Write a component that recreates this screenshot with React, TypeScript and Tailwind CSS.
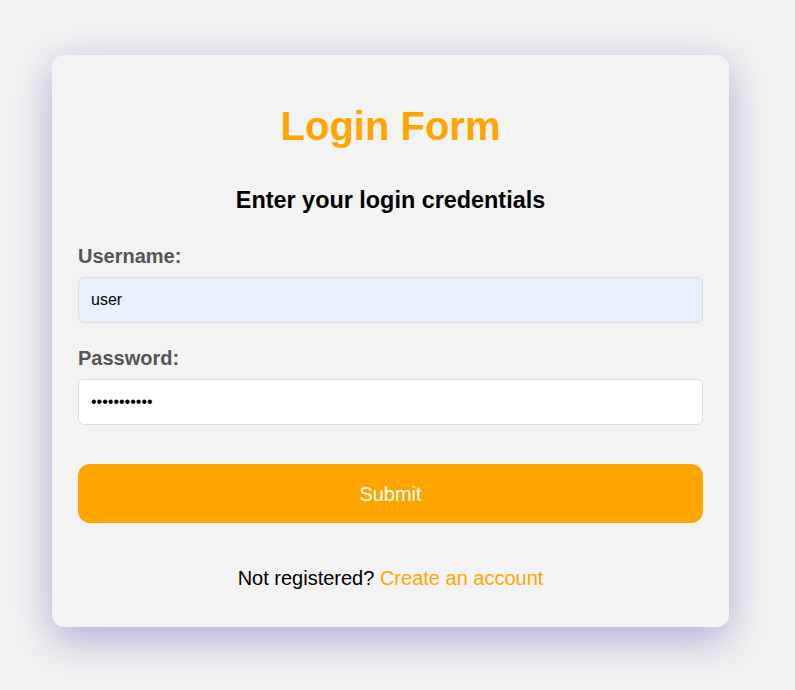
import React from "react";

const App = () => {
  return (
    <div className="w-full min-h-screen bg-[#f2f2f2] pt-[55px] pl-[52px] font-['Liberation_Sans',Arial,sans-serif]">
      <div className="w-[677px] h-[572px] bg-[#f3f3f3] rounded-[12px] shadow-[0_12px_40px_rgba(70,70,170,0.4)] px-[26px] pt-[48px]">
        <h1 className="text-center text-[40px] leading-[46px] font-bold text-[#ffa500]">Login Form</h1>
        <h2 className="mt-[38px] text-center text-[23.4px] leading-[27px] font-bold text-black">
          Enter your login credentials
        </h2>
        <label className="block mt-[31px] text-[20px] leading-[22px] font-bold text-[#555555]">Username:</label>
        <input
          type="text"
          defaultValue="user"
          className="block mt-[10px] w-full h-[46px] px-[12px] rounded-[6px] border border-[#dddddd] bg-[#e8f0fe] text-[16px] text-black outline-none"
        />
        <label className="block mt-[24px] text-[20px] leading-[22px] font-bold text-[#555555]">Password:</label>
        <input
          type="password"
          defaultValue="password123"
          className="block mt-[10px] w-full h-[46px] px-[12px] rounded-[6px] border border-[#dddddd] bg-white text-[16px] text-black outline-none"
        />
        <button className="block mt-[39px] w-full h-[59px] rounded-[12px] bg-[#ffa500] text-white text-[20px]">
          Submit
        </button>
        <p className="mt-[44px] text-center text-[20px] leading-[22px] text-black">
          Not registered? <a className="text-[#ffa500]">Create an account</a>
        </p>
      </div>
    </div>
  );
};

export default App;
